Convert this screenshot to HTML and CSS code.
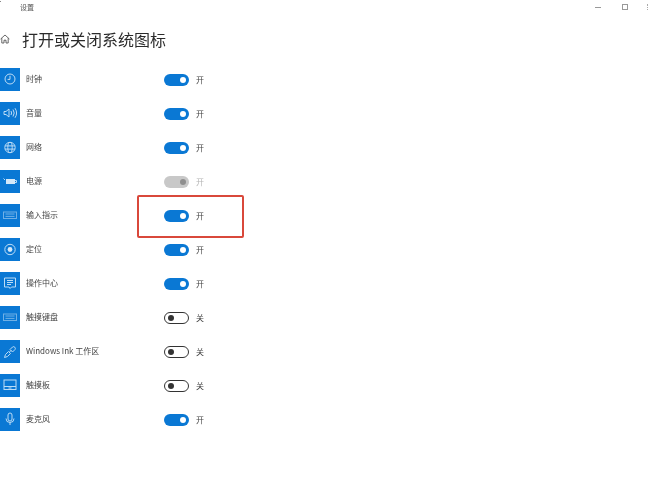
FILE: index.html
```html
<!DOCTYPE html>
<html lang="zh-CN">
<head>
<meta charset="utf-8">
<title>设置</title>
<link rel="stylesheet" href="styles.css">
</head>
<body>
<div class="page">
  <header class="titlebar">
    <span class="back"></span>
    <span class="app-name">设置</span>
    <span class="win-btns">
      <span class="win-min"></span>
      <span class="win-max"></span>
      <span class="win-close"></span>
    </span>
  </header>
  <div class="heading">
    <svg class="home" viewBox="0 0 10 10"><path d="M0.6 5 5 1l4.400 4M1.800 4.200V9h2.200V6.200h2V9h2.200V4.200" fill="none" stroke="#444" stroke-width="0.8"/></svg>
    <h1>打开或关闭系统图标</h1>
  </div>
  <ul class="list">
    <li class="row"><span class="tile"><svg viewBox="0 0 20 23"><circle cx="10" cy="11" r="5" /><path d="M10 7.800V11.400H7.600"/></svg></span><span class="label">时钟</span><span class="toggle on"></span><span class="state">开</span></li>
    <li class="row"><span class="tile"><svg viewBox="0 0 20 23"><path d="M4 9.500h2L9 7v8l-3-2.500H4zM11 9q1.200 2 0 4M13 7.500q2.400 3.500 0 7M15 6.200q3.200 4.800 0 9.600"/></svg></span><span class="label">音量</span><span class="toggle on"></span><span class="state">开</span></li>
    <li class="row"><span class="tile"><svg viewBox="0 0 20 23"><circle cx="10" cy="11.500" r="5.200"/><ellipse cx="10" cy="11.500" rx="2.200" ry="5.200"/><path d="M5 9.900h10M5 13.100h10"/></svg></span><span class="label">网络</span><span class="toggle on"></span><span class="state">开</span></li>
    <li class="row"><span class="tile"><svg viewBox="0 0 20 23"><path class="fill" d="M6 9h9v5H6z"/><path d="M3.500 8.500 5 10M15 10.500h1.500v2H15"/></svg></span><span class="label">电源</span><span class="toggle disabled"></span><span class="state muted">开</span></li>
    <li class="row"><span class="tile"><svg viewBox="0 0 20 23"><rect class="dim" x="3.500" y="8" width="13" height="6.500"/><path class="dim" d="M5.500 10h9M5.500 12.400h9"/></svg></span><span class="label">输入指示</span><span class="toggle on"></span><span class="state">开</span></li>
    <li class="row"><span class="tile"><svg viewBox="0 0 20 23"><circle cx="10" cy="11.500" r="5.200"/><circle class="fill" cx="10" cy="11.500" r="2.400"/></svg></span><span class="label">定位</span><span class="toggle on"></span><span class="state">开</span></li>
    <li class="row"><span class="tile"><svg viewBox="0 0 20 23"><path d="M4.500 6h11v9h-4l-1.500 1.500L9 15H4.500zM7 8.500h6M7 10.500h6M7 12.500h4"/></svg></span><span class="label">操作中心</span><span class="toggle on"></span><span class="state">开</span></li>
    <li class="row"><span class="tile"><svg viewBox="0 0 20 23"><rect class="dim" x="3.500" y="8" width="13" height="6.500"/><path class="dim" d="M5.500 10h9M5.500 12.400h9"/></svg></span><span class="label">触摸键盘</span><span class="toggle off"></span><span class="state">关</span></li>
    <li class="row"><span class="tile"><svg viewBox="0 0 20 23"><path d="M4.500 17.500 5.500 14.500l3-3 2 2-3 3zM9.500 12l2-2M11 10.500l-1-1 2.500-2.500a1.800 1.800 0 0 1 2.500 2.500L12.500 12z"/></svg></span><span class="label">Windows Ink 工作区</span><span class="toggle off"></span><span class="state">关</span></li>
    <li class="row"><span class="tile"><svg viewBox="0 0 20 23"><rect x="4" y="6" width="12" height="9.500"/><path d="M4 12.500h12M8.500 14h3"/></svg></span><span class="label">触摸板</span><span class="toggle off"></span><span class="state">关</span></li>
    <li class="row"><span class="tile"><svg viewBox="0 0 20 23"><rect x="8" y="5" width="4" height="8" rx="2"/><path d="M6 10.500q0 4 4 4t4-4M10 14.500V17"/></svg></span><span class="label">麦克风</span><span class="toggle on"></span><span class="state">开</span></li>
  </ul>
  <div class="highlight"></div>
</div>
</body>
</html>
```
FILE: styles.css
```css
* { box-sizing: border-box; }
html, body { margin: 0; padding: 0; background: #fff; }
body { width: 650px; height: 494px; overflow: hidden; font-family: "Noto Sans CJK SC", "Liberation Sans", sans-serif; color: #333; }
.page { position: relative; width: 650px; height: 494px; filter: blur(0.5px); }

.titlebar { display: flex; align-items: center; height: 14px; font-size: 7px; color: #555; }
.back { width: 1px; height: 1px; margin-top: -12px; background: #888; }
.app-name { margin-left: 19px; line-height: 14px; }
.win-btns { display: flex; align-items: center; margin-left: auto; }
.win-min { width: 6px; height: 1px; background: #999; margin-right: 21px; }
.win-max { width: 6px; height: 6px; border: 1px solid #999; margin-right: 19px; }
.win-close { width: 3px; height: 6px; border-left: 1px dotted #aaa; }

.heading { display: flex; align-items: center; height: 24px; margin-top: 13px; }
.home { width: 10px; height: 10px; flex: none; }
h1 { margin: 0 0 0 12px; font-size: 16px; font-weight: 400; color: #2b2b2b; line-height: 24px; white-space: nowrap; }

.list { list-style: none; margin: 12px 0 0; padding: 0; }
.row { display: flex; align-items: flex-start; height: 34px; padding-top: 5px; }
.tile { display: flex; width: 20px; height: 23px; background: #0a78d4; flex: none; }
.tile svg { width: 20px; height: 23px; fill: none; stroke: #bcdcf6; stroke-width: 1; }
.tile .fill { fill: #d4e8f9; stroke: none; }
.tile .dim { stroke: #6fb0e6; }
.label { width: 144px; padding-left: 6px; font-size: 8px; line-height: 22px; color: #444; white-space: nowrap; }
.toggle { position: relative; width: 25px; height: 12px; margin-top: 6px; border-radius: 6px; flex: none; }
.toggle::after { content: ""; position: absolute; top: 3px; width: 6px; height: 6px; border-radius: 50%; }
.toggle.on { background: #0a78d4; }
.toggle.on::after { right: 3px; background: #fff; }
.toggle.disabled { background: #c8c8c8; }
.toggle.disabled::after { right: 3px; background: #8f8f8f; }
.toggle.off { background: #fff; border: 1px solid #333; }
.toggle.off::after { left: 3px; top: 2px; background: #333; }
.state { margin-left: 7px; font-size: 8px; line-height: 24px; color: #444; }
.state.muted { color: #b5b5b5; }

.highlight { position: absolute; left: 137px; top: 195px; width: 107px; height: 43px; border: 2px solid #d9483b; border-radius: 2px; }
```
